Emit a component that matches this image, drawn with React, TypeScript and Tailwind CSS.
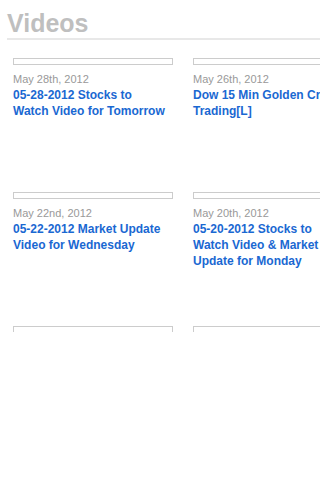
const videos = [
  { date: 'May 28th, 2012', title: '05-28-2012 Stocks to Watch Video for Tomorrow' },
  { date: 'May 26th, 2012', title: 'Dow 15 Min Golden Cross Trading[L]' },
  { date: 'May 22nd, 2012', title: '05-22-2012 Market Update Video for Wednesday' },
  { date: 'May 20th, 2012', title: '05-20-2012 Stocks to Watch Video & Market Update for Monday' },
];

function VideoItem({ date, title }: { date: string; title: string }) {
  return (
    <div className="h-[134px]">
      <div className="h-[7px] border border-[#cccccc]" />
      <div className="mt-[7px] text-[11px] leading-[15px] text-[#999999]">{date}</div>
      <a href="#" className="block w-[154px] text-[12px] leading-[16px] font-bold text-[#1a68d2]">
        {title}
      </a>
    </div>
  );
}

export default function App() {
  return (
    <div
      className="min-h-[480px] w-[320px] overflow-hidden bg-white"
      style={{ fontFamily: '"Liberation Sans", Arial, sans-serif' }}
    >
      <div className="pl-[7px] pt-[8px]">
        <h1 className="text-[25px] leading-[30px] font-bold text-[#bfbfbf]">Videos</h1>
        <div className="h-[2px] bg-[#e8e8e8]" />
      </div>
      <div className="mt-[18px] grid w-[360px] grid-cols-[160px_160px] gap-x-[20px] pl-[13px]">
        {videos.map((v) => (
          <VideoItem key={v.date} date={v.date} title={v.title} />
        ))}
        <div className="h-[6px] border-x border-t border-[#cccccc]" />
        <div className="h-[6px] border-x border-t border-[#cccccc]" />
      </div>
    </div>
  );
}
